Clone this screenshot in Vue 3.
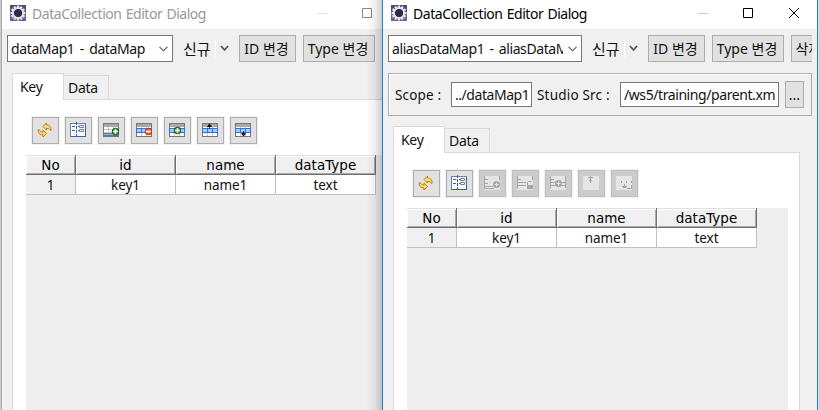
<script setup>
const columns = ['No', 'id', 'name', 'dataType']
const row = ['1', 'key1', 'name1', 'text']
const tools = ['refresh', 'split', 'add', 'remove', 'insert', 'up', 'down']
const windows = [
  { id: 'back', active: false, map: 'dataMap1 - dataMap' },
  { id: 'front', active: true, map: 'aliasDataMap1 - aliasDataM' },
]
const teeth = [0, 30, 60, 90, 120, 150, 180, 210, 240, 270, 300, 330]
</script>

<template>
  <div class="desktop">
    <section v-for="w in windows" :key="w.id" class="window" :class="w.id">
      <div class="frame">
        <header class="titlebar">
          <svg class="app-icon" width="16" height="16" viewBox="0 0 16 16">
            <rect width="16" height="16" fill="#55477d" />
            <rect y="9" width="16" height="7" fill="#72618f" />
            <rect v-for="a in teeth" :key="a" x="6.9" y="0.5" width="2.2" height="3" fill="#eeedf2" :transform="`rotate(${a} 8 8)`" />
            <circle cx="8" cy="8" r="5" fill="#1e1b2d" stroke="#e4e2e9" stroke-width="1.9" />
            <circle cx="8" cy="8" r="3.4" fill="#302b4b" />
          </svg>
          <span class="title">DataCollection Editor Dialog</span>
          <div class="caption">
            <svg class="minimize" width="10" height="10"><path d="M0 5.5H10" /></svg>
            <svg class="maximize" width="10" height="10"><path d="M.5.5H9.5V9.5H.5Z" /></svg>
            <svg class="close" width="11" height="10"><path d="M1 0L11 10M11 0L1 10" /></svg>
          </div>
        </header>

        <div class="actions">
          <div class="combo">
            <span class="combo-text">{{ w.map }}</span>
            <svg width="9" height="6" viewBox="0 0 9 6"><path d="M.5.8L4.5 4.8L8.5.8" fill="none" stroke="#555" stroke-width="1.1" /></svg>
          </div>
          <div class="create">
            <span class="create-text">신규</span>
            <i class="divider"></i>
            <svg width="9" height="7" viewBox="0 0 9 7"><path d="M1 1L4.5 5L8 1" fill="none" stroke="#555" stroke-width="1.8" /></svg>
          </div>
          <button class="button id-button">ID 변경</button>
          <button class="button type-button">Type 변경</button>
          <button class="button delete-button">삭제</button>
        </div>

        <div v-if="w.active" class="scope">
          <span class="scope-label">Scope :</span>
          <div class="field scope-field">../dataMap1</div>
          <span class="src-label">Studio Src :</span>
          <div class="field src-field">/ws5/training/parent.xm</div>
          <button class="button browse">...</button>
        </div>

        <nav class="tabs">
          <div class="tab selected">Key</div>
          <div class="tab other">Data</div>
        </nav>

        <main class="panel">
          <div class="tools">
            <div v-for="(t, i) in tools" :key="t" class="tool" :class="{ disabled: w.active && i > 1 }">
              <svg width="16" height="16" viewBox="0 0 16 16">
                <g v-if="t === 'refresh'" fill="#ffdc75" stroke="#b97d0b" stroke-width="1" stroke-linejoin="round">
                  <path d="M6 4.5L9.5 1V3C12.5 3 14.5 5 14 8.5L12.5 7.5L11.5 6.5H9.5V8Z" />
                  <path d="M9.5 11.5L6 15V13C3 13 .8 11 1.2 7.5L3 8.5L4.5 10H6V8.2Z" />
                </g>
                <g v-else-if="t === 'split'">
                  <rect x=".5" y="1.5" width="15" height="13" fill="#f6faff" stroke="#6d83ae" />
                  <path d="M.5 14.5H15.5V2" fill="none" stroke="#465d95" />
                  <path d="M2 4.5H5M2 8.5H5M8 4.5H9M8 8.5H9" stroke="#566078" />
                  <path d="M9.5 3.5H13.5V5.5H9.5ZM9.5 7.5H13.5V9.5H9.5Z" fill="#fff" stroke="#79808c" />
                  <path d="M6.5 0V16" stroke="#315d9b" stroke-dasharray="3 1" />
                </g>
                <g v-else-if="w.active">
                  <rect y="1" width="16" height="14" fill="#e5e5e5" />
                  <path v-if="t === 'up'" d="M5 2.5H10M7.5 1V8M6 5.5H9" fill="none" stroke="#a3a3a3" />
                  <path v-else-if="t === 'down'" d="M5.5 6V8M10.5 6V8M15.5 6V8M15.5 10V13.5H11M8.5 9V13M6 11.5H11M7 12.5H10" fill="none" stroke="#a3a3a3" />
                  <g v-else fill="none" stroke="#a5a5a5">
                    <template v-if="t === 'add'">
                      <path d="M.5 1V13.5H10M1 4.5H4M1 8.5H4M15.5 1V5M1 11.5H9" />
                      <circle cx="12.5" cy="9.5" r="3.5" fill="#a5a5a5" stroke="none" /><path d="M10.5 9.5H14.5M12.5 7.5V11.5" stroke="#e5e5e5" />
                    </template>
                    <template v-else-if="t === 'remove'">
                      <path d="M.5 1V13.5M1 4.5H4M1 7.5H9M1 10.5H9M15.5 1V5M10.5 10V7.5L11.5 6.5H14.5" />
                      <rect x="10" y="10" width="6" height="4" fill="#a5a5a5" stroke="none" />
                    </template>
                    <template v-else>
                      <path d="M.5 1V13.5M1 4.5H4M0 7.5H5M0 10.5H6M11 7.5H16M11 10.5H16M15.5 1V13" />
                      <circle cx="8.5" cy="8.5" r="3.5" fill="#a5a5a5" stroke="none" /><path d="M6.5 8.5H10.5M8.5 6.5V10.5" stroke="#e5e5e5" />
                    </template>
                  </g>
                </g>
                <g v-else>
                  <rect x=".5" y="1.5" width="15" height="13" fill="#fff" stroke="#777" />
                  <rect x="1" y="2" width="14" height="3" fill="#a9a9a9" />
                  <path d="M1 7.5H15M1 10.5H15M5.5 5V14M10.5 5V14" stroke="#c6c6c6" />
                  <rect v-if="t === 'add'" x="0" y="11" width="16" height="3" fill="#3f7bca" />
                  <rect v-else x="0" y="6" width="16" height="5" fill="#3b73c3" />
                  <path v-if="t === 'add'" d="M1 12.5H15" stroke="#85b8ec" />
                  <path v-else d="M1 8.5H5M6 8.5H10M11 8.5H15" stroke="#a6cafa" stroke-width="3" />
                  <g v-if="t === 'add' || t === 'insert'" :transform="t === 'add' ? 'translate(12.5 9.5)' : 'translate(8.5 8.5)'">
                    <circle r="3.3" fill="#38883b" stroke="#175d1a" /><path d="M-2.5 0H2.5M0-2.5V2.5" stroke="#fff" stroke-width="1.6" />
                  </g>
                  <g v-else-if="t === 'remove'"><circle cx="12.5" cy="9.5" r="3.3" fill="#e76534" stroke="#b63812" /><path d="M10 9.5H15" stroke="#fff" stroke-width="1.7" /></g>
                  <path v-else-if="t === 'up'" d="M7.5 7V3M5.5 4.5L7.5 2L9.5 4.5Z" fill="#000" stroke="#000" stroke-width=".7" />
                  <path v-else d="M8.5 9V12M6.5 11.5H10.5L8.5 14Z" fill="#000" stroke="#000" stroke-width=".7" />
                </g>
              </svg>
            </div>
          </div>
          <div class="grid-area">
            <div class="grid">
              <div v-for="c in columns" :key="c" class="head">{{ c }}</div>
              <div v-for="c in row" :key="c" class="cell">{{ c }}</div>
            </div>
          </div>
        </main>
      </div>
    </section>
  </div>
</template>

<style>
html, body { margin: 0; overflow: hidden; }
</style>

<style scoped>
* { box-sizing: border-box; }
.desktop { width: 819px; height: 410px; display: grid; grid-template-columns: 380px 436px; padding-left: 2px; overflow: hidden; background: linear-gradient(90deg, #ccc 1px, #aaa 1px, #aaa 2px, #dce1e6 2px); font: 14px/18px "Noto Sans", "Noto Sans CJK KR", sans-serif; color: #111; white-space: nowrap; }
.window { position: relative; height: 410px; overflow: hidden; background: #f0f0f0; }
.front { border: solid #1883d7; border-width: 0 1px; }
.back::after { content: ""; position: absolute; right: 0; top: 0; width: 16px; height: 410px; background: linear-gradient(90deg, transparent, rgba(0, 0, 0, .05) 50%, rgba(0, 0, 0, .19)); }
.frame { width: 434px; height: 410px; display: flex; flex-direction: column; }
.titlebar { height: 29px; flex: none; display: flex; align-items: flex-start; padding: 5px 18px 0 8px; background: #fff; }
.title { margin-left: 6px; letter-spacing: -.46px; word-spacing: 1px; color: #000; }
.back .title { color: #999; }
.caption { display: flex; gap: 35px; margin: 3px 0 0 auto; }
.caption svg { fill: none; stroke: #000; }
.caption .minimize { stroke: #ccc; }
.back .minimize { stroke: #e3e3e3; }
.back .maximize { stroke: #888; }
.actions { display: flex; flex: none; height: 44px; padding: 6px 0 0 5px; margin-right: 5px; overflow: hidden; }
.combo { width: 166px; height: 27px; flex: none; display: flex; align-items: center; justify-content: space-between; border: 1px solid #777; background: #fff; padding: 0 4px 0 3px; }
.front .combo { width: 194px; }
.combo-text { overflow: hidden; letter-spacing: -.38px; word-spacing: 2px; }
.front .combo-text { width: 171px; letter-spacing: -.42px; }
.combo svg { flex: none; }
.create { width: 66px; height: 27px; flex: none; display: flex; align-items: center; padding-left: 10px; }
.create-text { width: 32px; font-size: 15px; }
.divider { width: 1px; height: 17px; background: #fff; margin-right: 4px; }
.button { height: 27px; flex: none; border: 1px solid #adadad; background: #e1e1e1; padding: 0 2px 0 0; font: inherit; color: #111; white-space: nowrap; }
.id-button { width: 57px; margin-right: 7px; }
.type-button { width: 72px; margin-right: 7px; }
.delete-button { width: 37px; }
.scope { flex: none; width: 424px; height: 43px; margin: 0 5px 10px; border: 1px solid #adadad; box-shadow: inset 1px 1px #fff; display: flex; align-items: center; padding-left: 6px; }
.scope-label { width: 56px; font-size: 13.5px; letter-spacing: .15px; }
.field { height: 25px; border: 1px solid #777; background: #fff; padding: 3px 0 0 3px; overflow: hidden; }
.scope-field { width: 81px; letter-spacing: -.45px; }
.src-label { width: 88px; padding-left: 5px; font-size: 13.5px; letter-spacing: .2px; }
.src-field { width: 159px; letter-spacing: -.42px; }
.browse { width: 19px; margin-left: 6px; padding: 0; }
.tabs { flex: none; height: 26px; margin-left: 10px; display: flex; align-items: flex-end; }
.tab { border: solid #d9d9d9; border-width: 1px 1px 0; }
.selected { position: relative; width: 52px; height: 27px; margin-bottom: -1px; background: #fff; padding: 4px 0 0 7px; z-index: 1; letter-spacing: -.3px; }
.other { width: 45px; height: 24px; border-left: 0; padding: 3px 0 0 4px; letter-spacing: -.3px; }
.panel { flex: 1; min-height: 0; margin-left: 10px; width: 407px; border: solid #d9d9d9; border-width: 1px 1px 0; background: #fff; padding: 17px 11px 0 13px; display: flex; flex-direction: column; }
.tools { display: flex; gap: 6px; padding-left: 6px; flex: none; margin-bottom: 11px; }
.tool { width: 27px; height: 27px; border: 1px solid #adadad; background: #e1e1e1; box-shadow: 0 0 0 1px #f0f0f0; padding: 4px; }
.tool svg { display: block; }
.disabled { background: #ccc; border-color: #bfbfbf; }
.grid-area { flex: 1; background: #efefef; }
.grid { width: 350px; display: grid; grid-template-columns: 50px 100px 100px 100px; grid-template-rows: 20px 20px; text-align: center; }
.head { border: solid #6f6f6f; border-width: 0 1px 1px 0; box-shadow: inset 0 1px #e0e0e0, inset 1px 2px #fff, inset -1px -1px #aaa; background: #f0f0f0; font: 13.5px/21px "DejaVu Sans", sans-serif; color: #000; }
.cell { border: solid #c0c0c0; border-width: 0 1px 1px 0; background: #fff; line-height: 21px; font-size: 13.5px; letter-spacing: -.1px; }
.cell:nth-child(5) { background: #f0f0f0; }
</style>
